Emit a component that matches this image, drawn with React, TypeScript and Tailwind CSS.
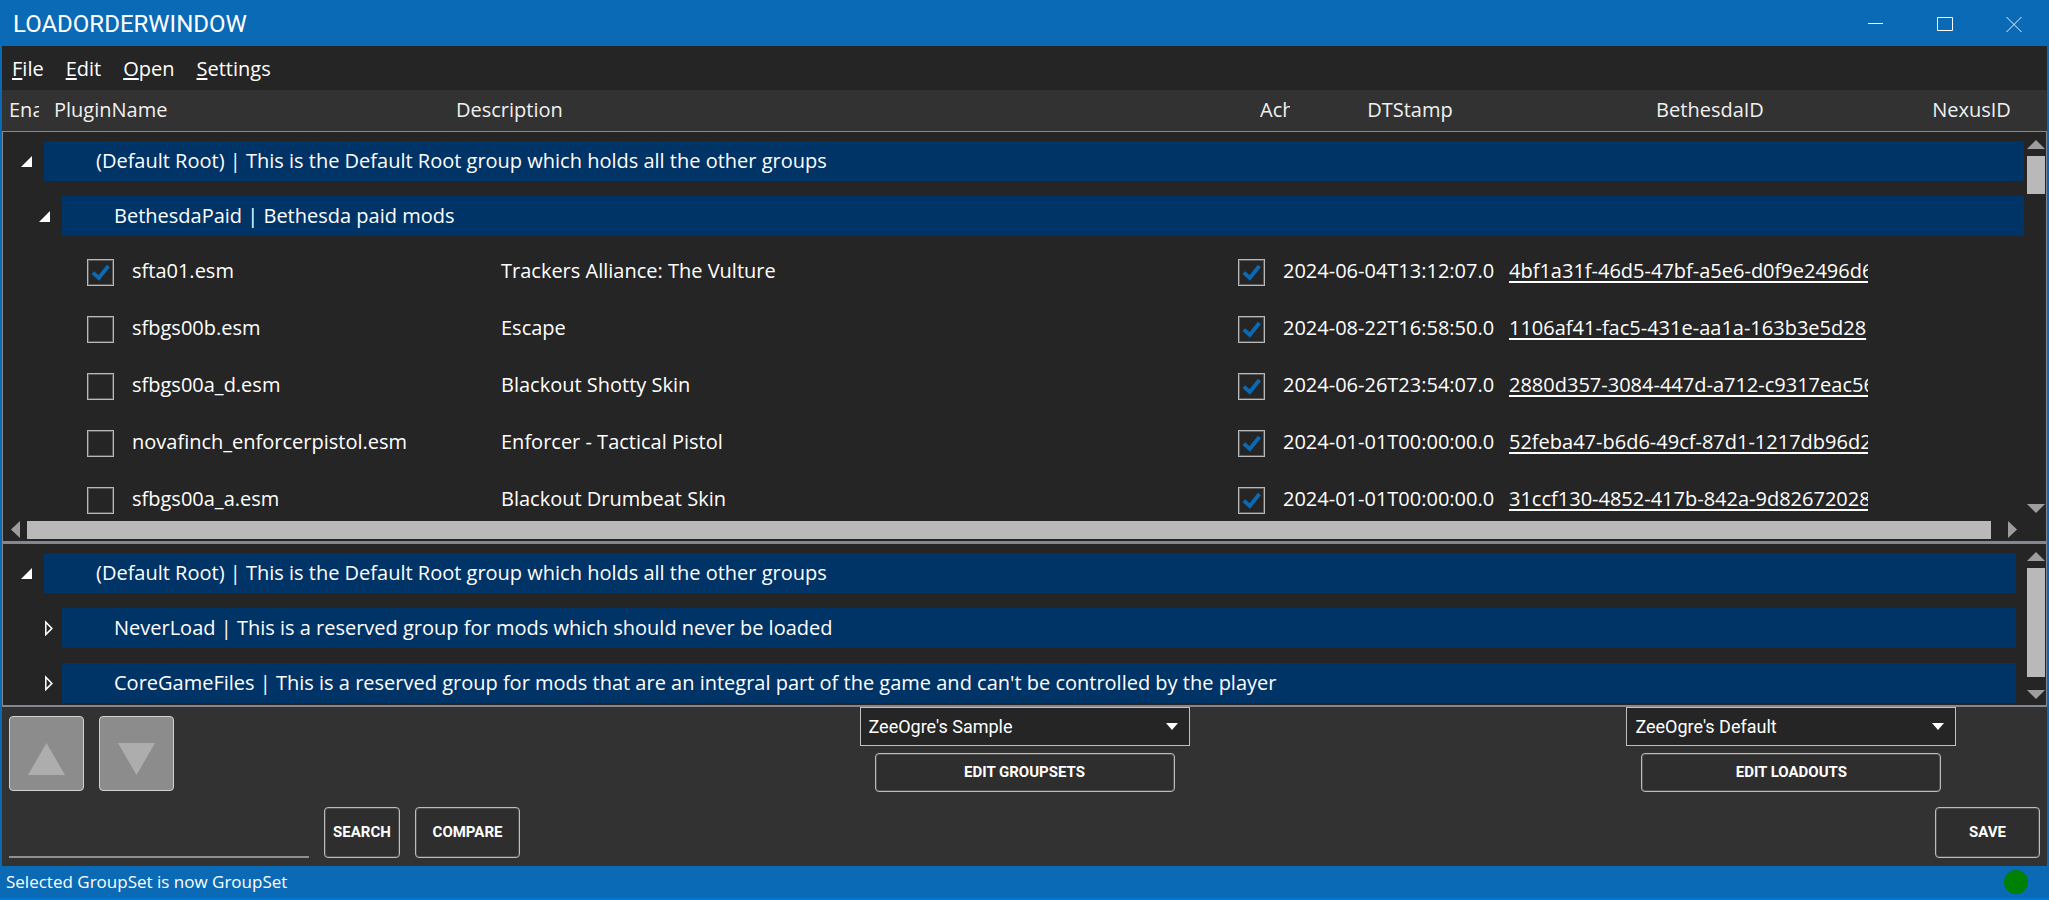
import { ReactNode, useState } from "react";

type Plugin = {
  enabled: boolean;
  name: string;
  description: string;
  stamp: string;
  bethesdaId: string;
};

const plugins: Plugin[] = [
  { enabled: true, name: "sfta01.esm", description: "Trackers Alliance: The Vulture", stamp: "2024-06-04T13:12:07.0", bethesdaId: "4bf1a31f-46d5-47bf-a5e6-d0f9e2496d6" },
  { enabled: false, name: "sfbgs00b.esm", description: "Escape", stamp: "2024-08-22T16:58:50.0", bethesdaId: "1106af41-fac5-431e-aa1a-163b3e5d28" },
  { enabled: false, name: "sfbgs00a_d.esm", description: "Blackout Shotty Skin", stamp: "2024-06-26T23:54:07.0", bethesdaId: "2880d357-3084-447d-a712-c9317eac56" },
  { enabled: false, name: "novafinch_enforcerpistol.esm", description: "Enforcer - Tactical Pistol", stamp: "2024-01-01T00:00:00.0", bethesdaId: "52feba47-b6d6-49cf-87d1-1217db96d2" },
  { enabled: false, name: "sfbgs00a_a.esm", description: "Blackout Drumbeat Skin", stamp: "2024-01-01T00:00:00.0", bethesdaId: "31ccf130-4852-417b-842a-9d82672028" },
];

function Arrow({ points, className }: { points: string; className: string }) {
  return (
    <svg viewBox="0 0 18 18" className={className} fill="currentColor" aria-hidden="true">
      <polygon points={points} />
    </svg>
  );
}

const UP = "9,4 18,13 0,13";
const DOWN = "0,4 18,4 9,13";
const LEFT = "13,0 13,17 4,8.5";
const RIGHT = "5,0 5,17 14,8.5";

function Check({ label, checked }: { label: string; checked: boolean }) {
  const [on, setOn] = useState(checked);
  return (
    <label className="grid size-[27px] cursor-pointer place-items-center">
      <input
        type="checkbox"
        aria-label={label}
        checked={on}
        onChange={() => setOn(!on)}
        className="col-start-1 row-start-1 size-[27px] appearance-none border border-[#b9b9b9] bg-[#252525] shadow-[inset_0_0_0_1px_#5a5a5a]"
      />
      {on && (
        <svg viewBox="0 0 27 27" className="pointer-events-none col-start-1 row-start-1 size-[27px]" fill="none" aria-hidden="true">
          <path d="M5.8 13.6 L11.8 19 L21.4 7" stroke="#0a6ab6" strokeWidth="3.8" />
        </svg>
      )}
    </label>
  );
}

function GroupRow({ nested = false, open = false, columns, children }: { nested?: boolean; open?: boolean; columns: number; children: ReactNode }) {
  return (
    <tr>
      <td colSpan={columns} className="h-[55px] p-0">
        <div className="flex h-10 items-stretch">
          <button
            aria-label={open ? "Collapse group" : "Expand group"}
            className={`flex shrink-0 items-center justify-end ${nested ? "w-[59px]" : "w-[41px]"} ${open ? "pr-3" : "pr-2"}`}
          >
            {open ? (
              <svg viewBox="0 0 11 16" className="h-4 w-[11px]" aria-hidden="true">
                <polygon points="11,3 11,14 0,14" fill="#fff" />
              </svg>
            ) : (
              <svg viewBox="0 0 10 16" className="h-4 w-2.5" fill="none" aria-hidden="true">
                <polygon points="1.8,2.2 1.8,14.6 7.9,8.4" stroke="#fff" strokeWidth="1.5" />
              </svg>
            )}
          </button>
          <div className="min-w-0 flex-1 overflow-hidden bg-[#003366] pl-[52px] leading-10 whitespace-nowrap">{children}</div>
        </div>
      </td>
    </tr>
  );
}

function VerticalBar({ thumb }: { thumb: string }) {
  return (
    <div className="flex w-[18px] shrink-0 flex-col items-center text-[#9d9d9d]">
      <button aria-label="Scroll up" className="mt-1 h-[18px] w-full">
        <Arrow points={UP} className="size-[18px]" />
      </button>
      <div className={`mt-0.5 w-full bg-[#b9b9b9] ${thumb}`} />
      <button aria-label="Scroll down" className="mt-auto mb-px h-[18px] w-full">
        <Arrow points={DOWN} className="size-[18px]" />
      </button>
    </div>
  );
}

function Picker({ label, value, action }: { label: string; value: string; action: string }) {
  return (
    <div className="flex w-[330px] flex-col items-center gap-[7px]">
      <div className="relative w-full">
        <select aria-label={label} className="h-[39px] w-full appearance-none border border-[#c0c0c0] bg-[#252525] pt-px pl-2 font-[Roboto,sans-serif] text-lg text-white">
          <option>{value}</option>
        </select>
        <svg viewBox="0 0 12 7" className="pointer-events-none absolute top-4 right-3 h-[7px] w-3" aria-hidden="true">
          <polygon points="0,0 12,0 6,7" fill="#fff" />
        </svg>
      </div>
      <Button className="h-[39px] w-[300px]">{action}</Button>
    </div>
  );
}

function Button({ className, children }: { className: string; children: ReactNode }) {
  return (
    <button className={`rounded-[4px] border border-[#bcbcbc] bg-[#2e2e2e] font-[Roboto,sans-serif] text-[15px] font-bold text-white shadow-[inset_0_0_0_1px_#505050] ${className}`}>
      {children}
    </button>
  );
}

function MoveButton({ label, points }: { label: string; points: string }) {
  return (
    <button aria-label={label} className="flex size-[75px] items-end justify-center rounded-[4px] border border-[#d0d0d0] bg-[#8c8c8c] pb-[15px]">
      <svg viewBox="0 0 37 32" className="h-8 w-[37px]" aria-hidden="true">
        <polygon points={points} fill="#adadad" />
      </svg>
    </button>
  );
}

export default function App() {
  return (
    <div className="flex min-h-screen flex-col bg-[#0a6ab6] font-['Open_Sans','Noto_Sans',sans-serif] text-xl text-white">
      <header className="flex h-[46px] shrink-0 items-center pl-[13px]">
        <h1 className="pt-0.5 font-[Roboto,sans-serif] text-2xl font-normal">LOADORDERWINDOW</h1>
        <div className="ml-auto flex h-full pr-px">
          <button aria-label="Minimize" className="flex w-[69px] items-center justify-center">
            <svg viewBox="0 0 16 16" className="size-4" stroke="#fff" aria-hidden="true"><path d="M0 8.5H15" /></svg>
          </button>
          <button aria-label="Maximize" className="flex w-[69px] items-center justify-center">
            <svg viewBox="0 0 16 16" className="size-4" stroke="#fff" fill="none" aria-hidden="true"><path d="M.5 2.5H15.5V15.5H.5Z" /></svg>
          </button>
          <button aria-label="Close" className="flex w-[69px] items-center justify-center">
            <svg viewBox="0 0 16 16" className="size-4 overflow-visible" stroke="#fff" strokeWidth=".9" aria-hidden="true"><path d="M.5 2L15.5 17M15.5 2L.5 17" /></svg>
          </button>
        </div>
      </header>

      <main className="mx-0.5 flex flex-1 flex-col bg-[#323232]">
        <nav className="flex h-11 items-center gap-[22px] bg-[#252525] pt-px pl-2.5">
          {["File", "Edit", "Open", "Settings"].map((item) => (
            <button key={item}>
              <span className="underline underline-offset-2">{item[0]}</span>
              {item.slice(1)}
            </button>
          ))}
        </nav>

        <table className="w-full table-fixed border-b border-[#828790] text-left text-[#f0f0f0]">
          <thead>
            <tr className="h-[41px] *:p-0 *:font-normal">
              <th className="w-[43px]"><div className="ml-[7px] w-[30px] overflow-hidden">Ena</div></th>
              <th className="w-[402px]"><div className="ml-[9px]">PluginName</div></th>
              <th><div className="ml-[9px]">Description</div></th>
              <th className="w-[42px]"><div className="ml-1.5 w-[30px] overflow-hidden">Ach</div></th>
              <th className="w-[228px] text-center">DTStamp</th>
              <th className="w-[372px] text-center">BethesdaID</th>
              <th className="w-[151px] text-center">NexusID</th>
            </tr>
          </thead>
        </table>

        <section aria-label="Active groups" className="border-x border-[#828790] bg-[#252525]">
          <div className="flex pr-px">
            <div className="mr-[3px] h-[387px] min-w-0 flex-1 overflow-hidden pt-0.5">
              <table className="w-full table-fixed">
                <colgroup>
                  <col className="w-[129px]" />
                  <col className="w-[369px]" />
                  <col />
                  <col className="w-[45px]" />
                  <col className="w-[226px]" />
                  <col className="w-[359px]" />
                  <col className="w-[156px]" />
                </colgroup>
                <tbody>
                  <GroupRow open columns={7}>(Default Root) | This is the Default Root group which holds all the other groups</GroupRow>
                  <GroupRow open nested columns={7}>BethesdaPaid | Bethesda paid mods</GroupRow>
                  {plugins.map((p) => (
                    <tr key={p.name} className="h-[57px] whitespace-nowrap *:p-0">
                      <td><div className="ml-[84px]"><Check label={`Enable ${p.name}`} checked={p.enabled} /></div></td>
                      <td><div className="pb-0.5">{p.name}</div></td>
                      <td><div className="pb-0.5">{p.description}</div></td>
                      <td><Check label={`Achievements ${p.name}`} checked /></td>
                      <td><div className="mr-[15px] overflow-hidden pb-0.5">{p.stamp}</div></td>
                      <td><div className="overflow-hidden pb-0.5"><a href="#details" className="underline underline-offset-3">{p.bethesdaId}</a></div></td>
                      <td />
                    </tr>
                  ))}
                </tbody>
              </table>
            </div>
            <VerticalBar thumb="h-[38px]" />
          </div>
          <div className="mr-[22px] flex h-[22px] items-center text-[#9d9d9d]">
            <button aria-label="Scroll left" className="ml-1 h-[18px]"><Arrow points={LEFT} className="size-[18px]" /></button>
            <div className="ml-0.5 h-[18px] flex-1 bg-[#b9b9b9]" />
            <button aria-label="Scroll right" className="ml-3 h-[18px] pr-[3px]"><Arrow points={RIGHT} className="size-[18px]" /></button>
          </div>
        </section>

        <section aria-label="Reserved groups" className="border-x border-t-[3px] border-b-2 border-[#828790] bg-[#252525]">
          <div className="flex pr-px">
            <div className="mr-[11px] h-[161px] min-w-0 flex-1 overflow-hidden pt-0.5">
              <table className="w-full table-fixed">
                <tbody>
                  <GroupRow open columns={1}>(Default Root) | This is the Default Root group which holds all the other groups</GroupRow>
                  <GroupRow nested columns={1}>NeverLoad | This is a reserved group for mods which should never be loaded</GroupRow>
                  <GroupRow nested columns={1}>CoreGameFiles | This is a reserved group for mods that are an integral part of the game and can't be controlled by the player</GroupRow>
                </tbody>
              </table>
            </div>
            <VerticalBar thumb="h-[109px]" />
          </div>
        </section>

        <section aria-label="Actions" className="flex flex-1 flex-col pb-2">
          <div className="grid grid-cols-4">
            <div className="flex gap-[15px] pt-[9px] pl-[7px]">
              <MoveButton label="Move up" points="18.5,0 37,32 0,32" />
              <MoveButton label="Move down" points="0,0 37,0 18.5,32" />
            </div>
            <div className="col-span-2 flex justify-center">
              <Picker label="Group set" value="ZeeOgre's Sample" action="EDIT GROUPSETS" />
            </div>
            <div className="flex justify-center">
              <Picker label="Loadout" value="ZeeOgre's Default" action="EDIT LOADOUTS" />
            </div>
          </div>
          <div className="mt-auto flex h-[51px] gap-[15px] px-[7px]">
            <input aria-label="Search text" type="text" className="w-[300px] border-b-2 border-[#8f8f8f] bg-transparent outline-none" />
            <Button className="w-[76px]">SEARCH</Button>
            <Button className="w-[105px]">COMPARE</Button>
            <Button className="ml-auto w-[105px]">SAVE</Button>
          </div>
        </section>
      </main>

      <footer className="flex h-[34px] shrink-0 items-center justify-between border-b-2 border-[#0078d7] pr-[21px] pl-1.5">
        <p className="text-[17px]">Selected GroupSet is now GroupSet</p>
        <span role="img" aria-label="Ready" className="size-6 rounded-full bg-[#008000]" />
      </footer>
    </div>
  );
}
